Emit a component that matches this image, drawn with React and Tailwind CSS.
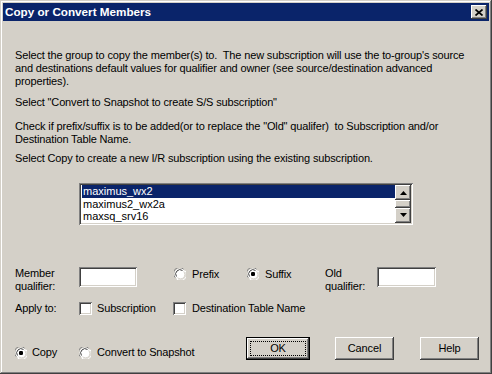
import React from 'react';

const FONT = { fontFamily: '"Liberation Sans", Arial, sans-serif' };

const SUNKEN = 'shadow-[inset_1px_1px_#808080,inset_-1px_-1px_#ffffff,inset_2px_2px_#404040,inset_-2px_-2px_#d4d0c8]';
const RAISED = 'shadow-[inset_-1px_-1px_#404040,inset_1px_1px_#ffffff,inset_-2px_-2px_#808080]';

function Radio({ checked }) {
  return (
    <svg width="12" height="12" viewBox="0 0 12 12" className="shrink-0">
      <circle cx="6" cy="6" r="5.5" fill="#ffffff" />
      <path d="M1.2 9.5 A5.5 5.5 0 0 1 9.5 1.2" fill="none" stroke="#808080" strokeWidth="1" />
      <path d="M2.5 8.5 A4.3 4.3 0 0 1 8.5 2.5" fill="none" stroke="#404040" strokeWidth="1" />
      <path d="M10.8 2.5 A5.5 5.5 0 0 1 2.5 10.8" fill="none" stroke="#ffffff" strokeWidth="1" />
      <path d="M9.6 3.5 A4.3 4.3 0 0 1 3.5 9.6" fill="none" stroke="#d4d0c8" strokeWidth="1" />
      {checked ? <rect x="4" y="4" width="4" height="4" rx="1.2" fill="#000000" /> : null}
    </svg>
  );
}

function Checkbox() {
  return <div className={`h-[13px] w-[13px] shrink-0 bg-white ${SUNKEN}`} />;
}

function Button({ label, isDefault }) {
  if (isDefault) {
    return (
      <div className="flex h-[23px] w-[64px] border border-black bg-[#d4d0c8]">
        <div className={`flex flex-1 p-[3px] ${RAISED}`}>
          <div className="flex flex-1 items-center justify-center border border-dotted border-black text-[11px]">{label}</div>
        </div>
      </div>
    );
  }
  return (
    <div className={`flex h-[23px] w-[59px] items-center justify-center bg-[#d4d0c8] text-[11px] ${RAISED}`}>{label}</div>
  );
}

function ScrollArrow({ up }) {
  return (
    <div className={`flex h-[16px] w-[16px] items-center justify-center bg-[#d4d0c8] ${RAISED}`}>
      <svg width="7" height="4" viewBox="0 0 7 4">
        <path d={up ? 'M3.5 0 L7 4 L0 4 Z' : 'M0 0 L7 0 L3.5 4 Z'} fill="#000000" />
      </svg>
    </div>
  );
}

const items = ['maximus_wx2', 'maximus2_wx2a', 'maxsq_srv16', 'mirka07_devel2'];

export default function App() {
  return (
    <div
      style={FONT}
      className="flex h-[374px] w-[492px] flex-col bg-[#d4d0c8] p-[3px] text-black shadow-[inset_-1px_-1px_#404040,inset_1px_1px_#d4d0c8,inset_-2px_-2px_#808080,inset_2px_2px_#ffffff]"
    >
      {/* title bar */}
      <div className="flex h-[18px] items-center justify-between bg-[#0a246a] pl-[2px] pr-[2px]">
        <span className="text-[11.7px] font-bold text-white">Copy or Convert Members</span>
        <div className={`flex h-[14px] w-[16px] items-center justify-center bg-[#d4d0c8] ${RAISED}`}>
          <svg width="8" height="7" viewBox="0 0 8 7">
            <path d="M0.5 0.5 L7.5 6.5 M7.5 0.5 L0.5 6.5" stroke="#000000" strokeWidth="1.7" />
          </svg>
        </div>
      </div>

      <div className="flex flex-col text-[11px] leading-[13px] tracking-[-0.15px]">
        <div className="mt-[28px] pl-[12px] whitespace-nowrap">
          <p>
            Select the group to copy the member(s) to.&nbsp; The new subscription will use the to-group's source
            <br />
            and destinations default values for qualifier and owner (see source/destination advanced
            <br />
            properties).
          </p>
          <p className="mt-[8px]">Select "Convert to Snapshot to create S/S subscription"</p>
          <p className="mt-[11px]">
            Check if prefix/suffix is to be added(or to replace the "Old" qualifer)&nbsp; to Subscription and/or
            <br />
            Destination Table Name.
          </p>
          <p className="mt-[6px]">Select Copy to create a new I/R subscription using the existing subscription.</p>
        </div>

        {/* list box */}
        <div className={`ml-[76px] mt-[18px] flex h-[42px] w-[334px] bg-white p-[2px] ${SUNKEN}`}>
          <div className="flex flex-1 flex-col overflow-hidden pl-[1px] tracking-normal">
            {items.map((item, index) => (
              <div
                key={item}
                className={`shrink-0 pl-[1px] ${index === 0 ? 'h-[13px] bg-[#0a246a] text-white' : 'h-[12px] leading-[12px]'}`}
              >
                {item}
              </div>
            ))}
          </div>
          <div className="flex w-[16px] flex-col bg-[#e9e7e3]">
            <ScrollArrow up />
            <div className={`h-[8px] bg-[#d4d0c8] ${RAISED}`} />
            <div className="flex-1" />
            <ScrollArrow />
          </div>
        </div>

        {/* qualifier row */}
        <div className="mt-[42px] flex items-start pl-[12px]">
          <div className="w-[64px]">
            Member
            <br />
            qualifier:
          </div>
          <div className={`h-[20px] w-[58px] bg-white ${SUNKEN}`} />
          <div className="ml-[37px] flex h-[14px] w-[73px] items-center gap-[6px]">
            <Radio />
            <span>Prefix</span>
          </div>
          <div className="flex h-[14px] w-[78px] items-center gap-[6px]">
            <Radio checked />
            <span>Suffix</span>
          </div>
          <div className="w-[52px]">
            Old
            <br />
            qualifier:
          </div>
          <div className={`h-[20px] w-[59px] bg-white ${SUNKEN}`} />
        </div>

        {/* apply row */}
        <div className="mt-[8px] flex h-[14px] items-center pl-[12px]">
          <div className="w-[64px]">Apply to:</div>
          <div className="flex w-[94px] items-center gap-[5px]">
            <Checkbox />
            <span>Subscription</span>
          </div>
          <div className="flex items-center gap-[6px]">
            <Checkbox />
            <span>Destination Table Name</span>
          </div>
        </div>

        {/* bottom row */}
        <div className="mt-[22px] flex items-start pl-[12px]">
          <div className="mt-[9px] flex w-[64px] items-center gap-[5px]">
            <Radio checked />
            <span>Copy</span>
          </div>
          <div className="mt-[9px] flex w-[167px] items-center gap-[6px]">
            <Radio />
            <span>Convert to Snapshot</span>
          </div>
          <Button label="OK" isDefault />
          <div className="ml-[25px]">
            <Button label="Cancel" />
          </div>
          <div className="ml-[26px]">
            <Button label="Help" />
          </div>
        </div>
      </div>
    </div>
  );
}
